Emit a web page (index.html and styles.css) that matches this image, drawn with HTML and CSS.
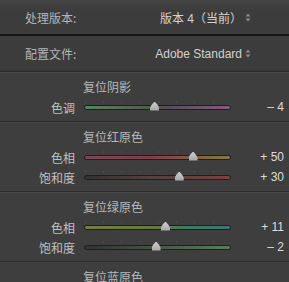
FILE: index.html
```html
<!DOCTYPE html>
<html lang="zh-CN">
<head>
    <meta charset="UTF-8" />
    <title>相机校准</title>
    <link rel="stylesheet" href="styles.css">
</head>
<body>
    <div class="panel">
        <div class="prop prop-first">
            <span class="prop-label">处理版本:</span>
            <span class="prop-value">版本 4（当前）
                <svg class="updown" width="6" height="9" viewBox="0 0 6 9"><path d="M3 0.5 L5.5 3.5 H0.5 Z M3 8.5 L5.5 5.5 H0.5 Z" fill="#8c8c8c"/></svg>
            </span>
        </div>
        <div class="prop">
            <span class="prop-label">配置文件:</span>
            <span class="prop-value">Adobe Standard
                <svg class="updown" width="6" height="9" viewBox="0 0 6 9"><path d="M3 0.5 L5.5 3.5 H0.5 Z M3 8.5 L5.5 5.5 H0.5 Z" fill="#8c8c8c"/></svg>
            </span>
        </div>

        <div class="group">
            <div class="group-title">复位阴影</div>
            <div class="slider-row">
                <span class="s-label">色调</span>
                <div class="track tint"><span class="thumb" style="left: 48%"></span></div>
                <span class="s-value">– 4</span>
            </div>
        </div>

        <div class="group">
            <div class="group-title">复位红原色</div>
            <div class="slider-row">
                <span class="s-label">色相</span>
                <div class="track red-hue"><span class="thumb" style="left: 74.5%"></span></div>
                <span class="s-value">+ 50</span>
            </div>
            <div class="slider-row">
                <span class="s-label">饱和度</span>
                <div class="track red-sat"><span class="thumb" style="left: 65%"></span></div>
                <span class="s-value">+ 30</span>
            </div>
        </div>

        <div class="group">
            <div class="group-title">复位绿原色</div>
            <div class="slider-row">
                <span class="s-label">色相</span>
                <div class="track green-hue"><span class="thumb" style="left: 55.5%"></span></div>
                <span class="s-value">+ 11</span>
            </div>
            <div class="slider-row">
                <span class="s-label">饱和度</span>
                <div class="track green-sat"><span class="thumb" style="left: 49%"></span></div>
                <span class="s-value">– 2</span>
            </div>
        </div>

        <div class="group">
            <div class="group-title">复位蓝原色</div>
        </div>
    </div>
</body>
</html>
```

FILE: styles.css
```css
html, body {
    margin: 0;
    padding: 0;
    background: #3e3e3e;
}

.panel {
    width: 289px;
    height: 282px;
    overflow: hidden;
    background: #3e3e3e;
    font-family: "Noto Sans CJK SC", "Liberation Sans", sans-serif;
    font-size: 12px;
    color: #c4c4c4;
}

.prop {
    display: flex;
    justify-content: space-between;
    align-items: center;
    height: 35px;
    padding: 0 38px 0 25px;
    background: #3c3c3c;
}

.prop-first {
    height: 34px;
    border-bottom: 2px solid #161616;
    background: linear-gradient(#464646, #3c3c3c 30%);
}

.prop-label {
    color: #b4b4b4;
}

.prop-value {
    display: flex;
    align-items: center;
    gap: 3px;
    color: #d2d2d2;
    font-family: "Liberation Sans", "Noto Sans CJK SC", sans-serif;
}

.updown {
    display: block;
}

.group {
    border-top: 1px solid #2b2b2b;
    box-shadow: inset 0 1px 0 #474747;
    padding: 5px 0 4px;
}

.group-title {
    height: 20px;
    line-height: 20px;
    padding-left: 83px;
    color: #b8b8b8;
}

.slider-row {
    display: grid;
    grid-template-columns: 75px 147px 44px;
    column-gap: 9px;
    align-items: center;
    height: 20px;
}

.s-label {
    text-align: right;
    color: #c0c0c0;
}

.s-value {
    text-align: right;
    color: #dcdcdc;
    font-family: "Liberation Sans", sans-serif;
}

.track {
    position: relative;
    height: 3px;
    border: 1px solid #1e1e1e;
    border-radius: 3px;
}

.track::before {
    content: "";
    position: absolute;
    left: 0;
    right: 0;
    top: -5px;
    height: 2px;
    background: repeating-linear-gradient(90deg, #4b4b4b 0 1px, transparent 1px 18.25px);
}

.thumb {
    position: absolute;
    top: -4px;
    width: 9px;
    height: 9px;
    margin-left: -4.5px;
    background: linear-gradient(#d0d0d0, #a4a4a4);
    clip-path: polygon(50% 0, 85% 40%, 100% 70%, 100% 100%, 0 100%, 0 70%, 15% 40%);
}

.tint {
    background: linear-gradient(90deg, #588658, #4c584c 50%, #584a58 55%, #885888);
}

.red-hue {
    background: linear-gradient(90deg, #7a4654, #7e3e46 45%, #845a40 75%, #887642);
}

.red-sat {
    background: linear-gradient(90deg, #333, #584040 50%, #843e3e);
}

.green-hue {
    background: linear-gradient(90deg, #787c40, #5c7a44 50%, #3e7864 75%, #3e7674);
}

.green-sat {
    background: linear-gradient(90deg, #333, #445844 50%, #4c864c);
}
```
